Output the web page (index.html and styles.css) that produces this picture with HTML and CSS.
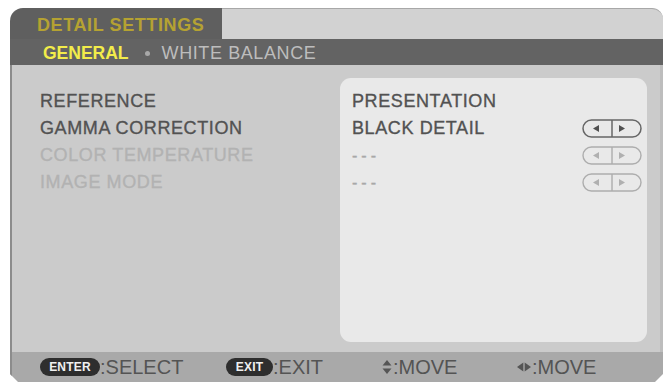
FILE: index.html
```html
<!DOCTYPE html>
<html>
<head>
<meta charset="utf-8">
<link rel="stylesheet" href="styles.css">
</head>
<body>
<div class="frame">
  <div class="tabrow">
    <div class="tab">DETAIL SETTINGS</div>
    <div class="strip"></div>
  </div>
  <div class="subbar">
    <span class="sub-active">GENERAL</span>
    <span class="sub-dot"></span>
    <span class="sub-item">WHITE BALANCE</span>
  </div>
  <div class="content">
    <div class="labels">
      <div class="row">REFERENCE</div>
      <div class="row">GAMMA CORRECTION</div>
      <div class="row dis">COLOR TEMPERATURE</div>
      <div class="row dis">IMAGE MODE</div>
    </div>
    <div class="panel">
      <div class="row vrow">PRESENTATION</div>
      <div class="row vrow">BLACK DETAIL
        <svg class="lr" viewBox="0 0 60 19" width="60" height="19"><rect x="1" y="1" width="58" height="17" rx="8.5" fill="none" stroke="#666" stroke-width="1.5"/><line x1="30" y1="1" x2="30" y2="18" stroke="#666" stroke-width="1.5"/><polygon points="11,9.5 17,6 17,13" fill="#505050"/><polygon points="43,9.5 37,6 37,13" fill="#505050"/></svg>
      </div>
      <div class="row vrow dis"><span class="dash">---</span>
        <svg class="lr" viewBox="0 0 60 19" width="60" height="19"><rect x="1" y="1" width="58" height="17" rx="8.5" fill="none" stroke="#adadad" stroke-width="1.4"/><line x1="30" y1="1" x2="30" y2="18" stroke="#adadad" stroke-width="1.4"/><polygon points="11,9.5 17,6 17,13" fill="#b0b0b0"/><polygon points="43,9.5 37,6 37,13" fill="#b0b0b0"/></svg>
      </div>
      <div class="row vrow dis"><span class="dash">---</span>
        <svg class="lr" viewBox="0 0 60 19" width="60" height="19"><rect x="1" y="1" width="58" height="17" rx="8.5" fill="none" stroke="#adadad" stroke-width="1.4"/><line x1="30" y1="1" x2="30" y2="18" stroke="#adadad" stroke-width="1.4"/><polygon points="11,9.5 17,6 17,13" fill="#b0b0b0"/><polygon points="43,9.5 37,6 37,13" fill="#b0b0b0"/></svg>
      </div>
    </div>
  </div>
  <div class="footer">
    <div class="fitem f1"><span class="pill pill-enter">ENTER</span>:SELECT</div>
    <div class="fitem f2"><span class="pill pill-exit">EXIT</span>:EXIT</div>
    <div class="fitem f3"><svg class="ico" viewBox="0 0 10 14" width="10" height="14"><polygon points="5,0 9.5,5.5 0.5,5.5" fill="#555"/><polygon points="5,14 9.5,8.5 0.5,8.5" fill="#555"/></svg>:MOVE</div>
    <div class="fitem f4"><svg class="ico" viewBox="0 0 14 10" width="14" height="10"><polygon points="0,5 6.3,0.5 6.3,9.5" fill="#555"/><polygon points="14,5 7.7,0.5 7.7,9.5" fill="#555"/></svg>:MOVE</div>
  </div>
</div>
</body>
</html>
```
FILE: styles.css
```css
* { box-sizing: border-box; }
body {
  margin: 0;
  background: #ffffff;
  font-family: "Liberation Sans", Arial, sans-serif;
}
.frame {
  margin: 8px 0 0 10px;
  width: 653px;
  height: 374px;
  display: flex;
  flex-direction: column;
}
.tabrow {
  height: 31px;
  display: flex;
}
.tab {
  width: 212px;
  background: #5f5f5f;
  border-top-left-radius: 13px;
  color: #b5a232;
  font-weight: bold;
  font-size: 18px;
  letter-spacing: 0.6px;
  padding: 3px 0 0 27px;
  display: flex;
  align-items: center;
}
.strip {
  flex: 1;
  background: #d2d2d2;
  border-top: 1px solid #a8a8a8;
  border-top-right-radius: 11px;
}
.subbar {
  height: 26px;
  background: #636363;
  display: flex;
  align-items: center;
  padding: 2px 0 0 33px;
  font-size: 18px;
}
.sub-active {
  color: #f2ec4a;
  font-weight: bold;
  font-size: 17.5px;
}
.sub-dot {
  width: 5px;
  height: 5px;
  border-radius: 50%;
  background: #a8a8a8;
  margin: 0 12px 0 16px;
}
.sub-item {
  color: #bdbdbd;
  letter-spacing: 0.6px;
}
.content {
  height: 287px;
  background: #cbcbcb;
  border-left: 2px solid #8c8c8c;
  border-right: 3px solid #bdbdbd;
  display: flex;
}
.labels {
  width: 328px;
  padding: 23px 0 0 28px;
}
.row {
  height: 27px;
  line-height: 27px;
  font-size: 18px;
  letter-spacing: 0.6px;
  color: #525252;
  -webkit-text-stroke: 0.35px currentColor;
  white-space: nowrap;
}
.row.dis { color: #b2b2b2; }
.panel {
  width: 307px;
  margin: 13px 0 10px 0;
  padding: 10px 5px 0 12px;
  background: #e9e9e9;
  border-radius: 11px;
}
.vrow {
  display: flex;
  align-items: center;
  justify-content: space-between;
}
.vrow.dis { color: #a8a8a8; }
.dash {
  letter-spacing: 4px;
  font-size: 16px;
}
.lr { display: block; }
.footer {
  height: 30px;
  background: #a9a9a9;
  border-left: 2px solid #8c8c8c;
  clip-path: polygon(0 0, 100% 0, 100% calc(100% - 8px), calc(100% - 8px) 100%, 8px 100%, 0 calc(100% - 8px));
  display: grid;
  grid-template-columns: 186px 156px 135px 1fr;
  align-items: center;
  padding-left: 28px;
  color: #545454;
  font-size: 20px;
}
.fitem {
  display: flex;
  align-items: center;
  white-space: nowrap;
}
.pill {
  display: inline-flex;
  align-items: center;
  justify-content: center;
  height: 18px;
  border-radius: 9px;
  background: #2e2e2e;
  color: #f0f0f0;
  font-weight: bold;
  font-size: 12px;
  letter-spacing: 0.2px;
}
.pill-enter { width: 60px; }
.pill-exit { width: 47px; }
.ico { margin-right: 1px; }
```
